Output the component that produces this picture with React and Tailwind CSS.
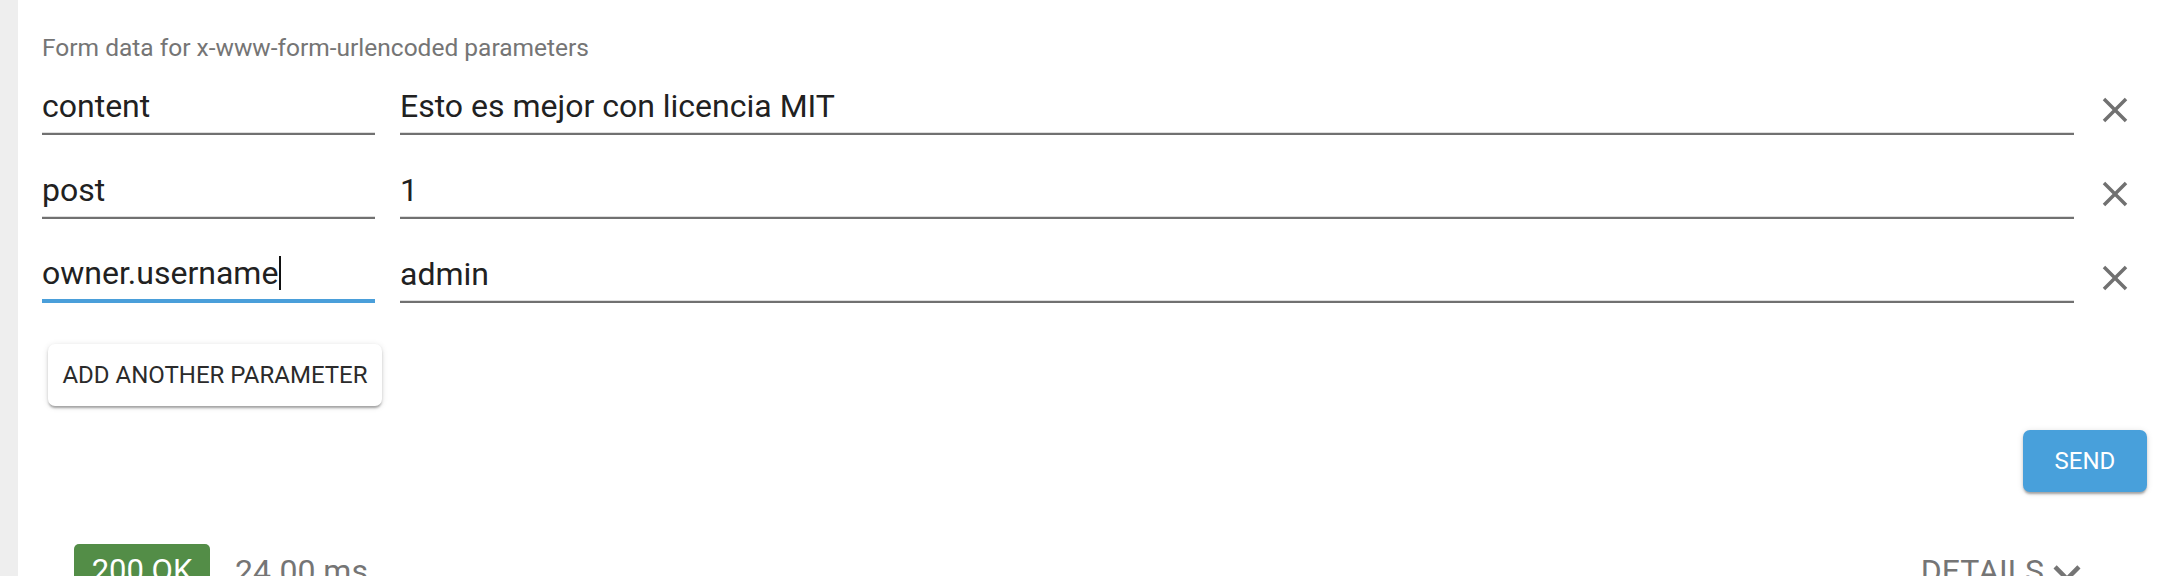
import React from "react";

const font = { fontFamily: "Roboto, 'Liberation Sans', sans-serif" };

function CloseIcon() {
  return (
    <svg width="42" height="42" viewBox="0 0 24 24" fill="#717171">
      <path d="M19 6.41L17.59 5 12 10.59 6.41 5 5 6.41 10.59 12 5 17.59 6.41 19 12 13.41 17.59 19 19 17.59 13.41 12z" />
    </svg>
  );
}

function Underline({ focused }) {
  if (focused) return <div className="h-[4px] bg-[#4a9fda]" />;
  return (
    <div>
      <div className="h-px bg-[#dedede]" />
      <div className="h-[2px] bg-[#717171]" />
    </div>
  );
}

function Field({ value, focused, className }) {
  return (
    <div className={"flex flex-col " + className}>
      <div className="flex items-center h-[36px] mb-[8px] text-[32px] leading-[36px] text-[#212121]">
        <span>{value}</span>
        {focused && <span className="ml-px w-[2px] h-[34px] bg-[#111]" />}
      </div>
      <Underline focused={focused} />
    </div>
  );
}

function Row({ k, v, focused }) {
  return (
    <div className="h-[84px] shrink-0 flex items-end">
      <Field value={k} focused={focused} className="w-[333px]" />
      <Field value={v} className="flex-1 ml-[25px]" />
      <div className="w-[82px] flex justify-center mb-[4px]">
        <CloseIcon />
      </div>
    </div>
  );
}

export default function App() {
  return (
    <div className="flex h-[576px] overflow-hidden bg-white" style={font}>
      <div className="w-[18px] shrink-0 bg-[#eeeeee]" />
      <div className="flex-1 flex flex-col pl-[24px] pr-[22px]">
        <div className="h-[51px] shrink-0 pt-[36px] text-[24.5px] leading-[24px] text-[#757575]">
          Form data for x-www-form-urlencoded parameters
        </div>
        <Row k="content" v="Esto es mejor con licencia MIT" />
        <Row k="post" v="1" />
        <Row k="owner.username" v="admin" focused />
        <div className="mt-[41px] shrink-0 pl-[6px]">
          <button className="w-[334px] h-[62px] rounded-[7px] bg-white text-[24px] text-[#2b2b2b] shadow-[0_3px_2px_-1px_rgba(0,0,0,0.2),0_2px_3px_0_rgba(0,0,0,0.14),0_1px_6px_0_rgba(0,0,0,0.12)]">
            ADD ANOTHER PARAMETER
          </button>
        </div>
        <div className="mt-[24px] shrink-0 flex justify-end pr-[9px]">
          <button className="w-[124px] h-[62px] rounded-[7px] bg-[#48a0db] text-white text-[24px] shadow-[0_3px_2px_-1px_rgba(0,0,0,0.2),0_2px_3px_0_rgba(0,0,0,0.14),0_1px_6px_0_rgba(0,0,0,0.12)]">
            SEND
          </button>
        </div>
        <div className="mt-[52px] shrink-0 flex items-start pl-[32px] pr-[62px]">
          <div className="h-[52px] w-[136px] rounded-[5px] bg-[#538d47] text-white text-[31px] leading-[54px] text-center">
            200 OK
          </div>
          <div className="ml-[25px] text-[32px] leading-[54px] text-[#757575]">24.00 ms</div>
          <div className="flex-1" />
          <div className="flex items-start text-[32px] leading-[54px] text-[#757575]">
            <span>DETAILS</span>
            <svg className="ml-[-4px] mt-[2px]" width="54" height="54" viewBox="0 0 24 24" fill="#757575">
              <path d="M16.59 8.59L12 13.17 7.41 8.59 6 10l6 6 6-6z" />
            </svg>
          </div>
        </div>
      </div>
    </div>
  );
}
